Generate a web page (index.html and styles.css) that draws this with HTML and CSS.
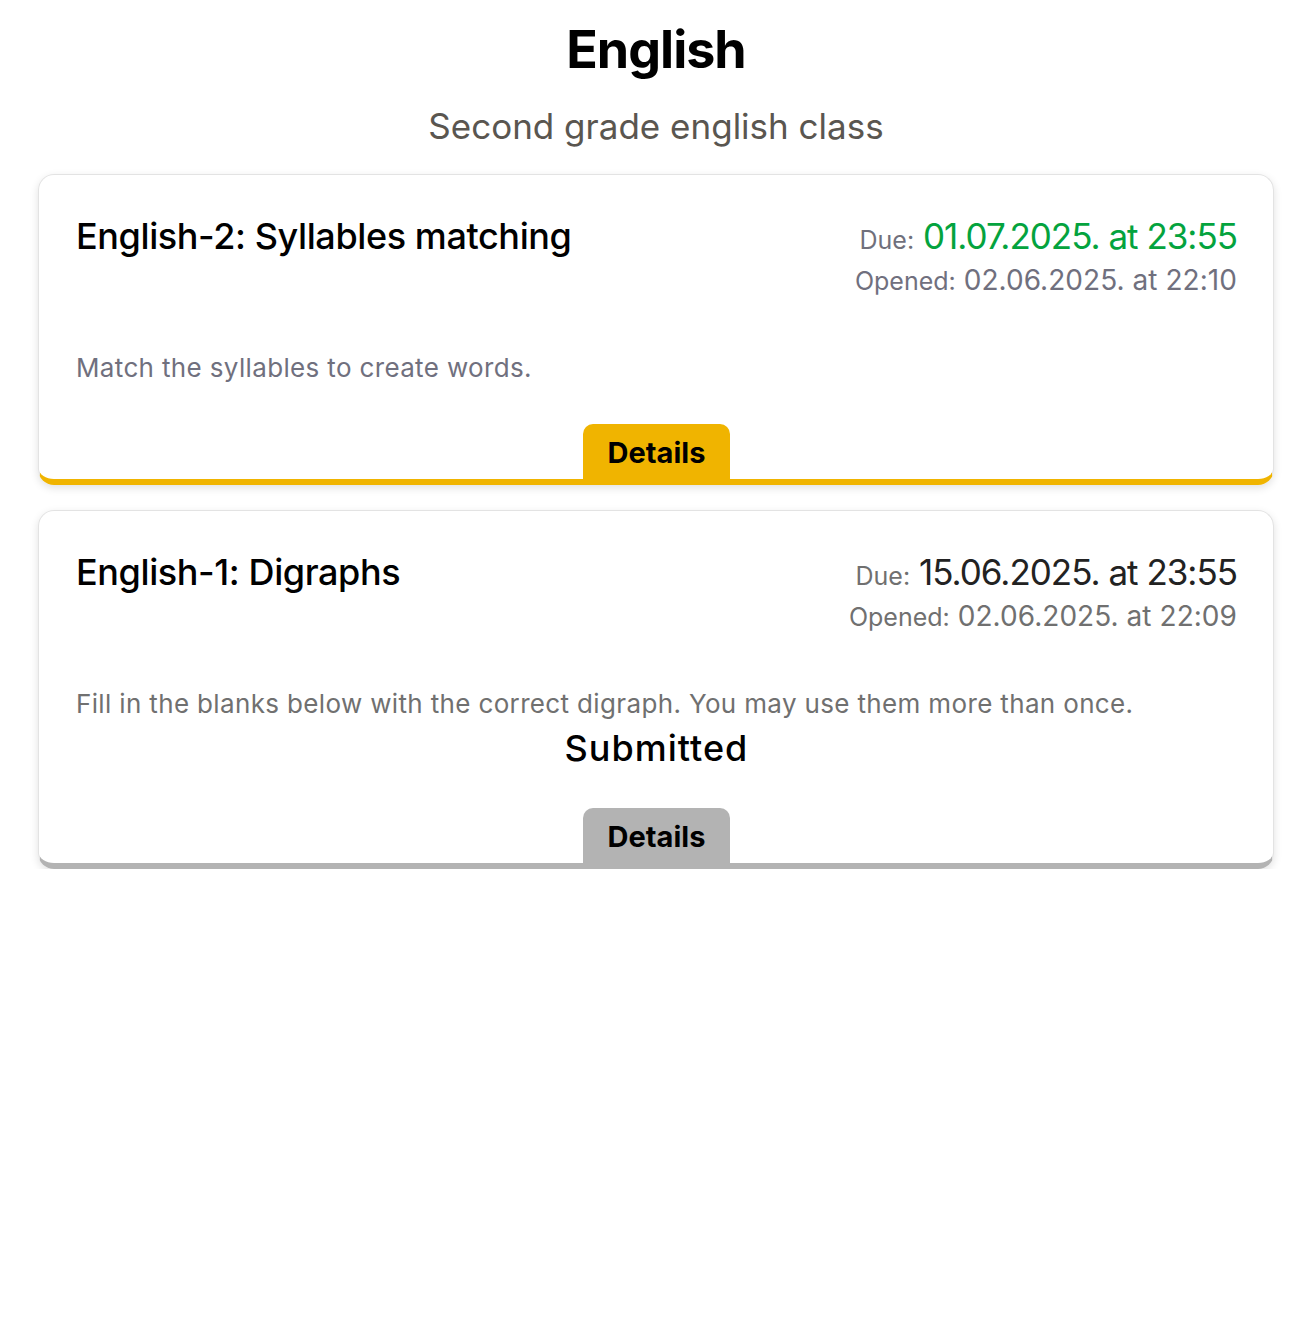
FILE: index.html
```html
<!DOCTYPE html>
<html lang="en">
<head>
<meta charset="utf-8">
<title>English</title>
<link rel="stylesheet" href="styles.css">
</head>
<body>
<main class="page">
  <header class="page-head">
    <h1 class="page-title">English</h1>
    <p class="page-sub">Second grade english class</p>
  </header>

  <section class="cards">
    <article class="card card-open">
      <div class="card-top">
        <h2 class="card-title">English-2: Syllables matching</h2>
        <div class="dates">
          <div class="due"><span class="lbl">Due:</span> <span class="due-val green">01.07.2025. at 23:55</span></div>
          <div class="opened blue-gray"><span class="lbl-o">Opened:</span> 02.06.2025. at 22:10</div>
        </div>
      </div>
      <p class="desc blue-gray">Match the syllables to create words.</p>
      <div class="foot">
        <a class="details yellow">Details</a>
      </div>
    </article>

    <article class="card card-done">
      <div class="card-top">
        <h2 class="card-title">English-1: Digraphs</h2>
        <div class="dates">
          <div class="due"><span class="lbl gray">Due:</span> <span class="due-val dark">15.06.2025. at 23:55</span></div>
          <div class="opened gray"><span class="lbl-o">Opened:</span> 02.06.2025. at 22:09</div>
        </div>
      </div>
      <p class="desc gray">Fill in the blanks below with the correct digraph. You may use them more than once.</p>
      <p class="status">Submitted</p>
      <div class="foot">
        <a class="details grey">Details</a>
      </div>
    </article>
  </section>
</main>
</body>
</html>
```

FILE: styles.css
```css
* { box-sizing: border-box; }
html, body { margin: 0; padding: 0; background: #fff; }
body {
  font-family: "Inter", "Noto Sans", sans-serif;
  color: #000;
}
.page {
  width: 1236px;
  margin-left: 38px;
}
.page-head { text-align: center; }
.page-title {
  margin: 0;
  padding-top: 16px;
  font-size: 52px;
  line-height: 68px;
  font-weight: 700;
  letter-spacing: -1px;
}
.page-sub {
  margin: 0;
  padding-top: 18px;
  font-size: 35px;
  line-height: 48px;
  color: #5a5650;
  letter-spacing: 0;
}
.cards {
  margin-top: 24px;
  display: flex;
  flex-direction: column;
  gap: 25px;
}
.card {
  border: 1px solid #e3e3e3;
  border-radius: 16px;
  box-shadow: 0 3px 8px rgba(0,0,0,0.12);
  padding: 37px 36px 0 37px;
  display: flex;
  flex-direction: column;
  overflow: hidden;
}
.card-open { border-bottom: 6px solid #f0b400; }
.card-done { border-bottom: 6px solid #b3b3b3; }
.card-top {
  display: flex;
  justify-content: space-between;
  align-items: flex-start;
}
.card-title {
  margin: 0;
  font-size: 36px;
  line-height: 48px;
  font-weight: 500;
  letter-spacing: -0.4px;
}
.dates { text-align: right; }
.due { font-size: 35px; line-height: 48px; letter-spacing: -1px; }
.lbl { font-size: 25px; color: #70707c; letter-spacing: 0; }
.lbl.gray { color: #707070; }
.due-val.green { color: #04a33e; }
.due-val.dark { color: #222; }
.opened { font-size: 28px; line-height: 32px; letter-spacing: 0.05px; }
.lbl-o { font-size: 25px; letter-spacing: 0; }
.blue-gray { color: #70707e; }
.gray { color: #707070; }
.desc {
  margin: 51px 0 0 0;
  font-size: 26px;
  line-height: 40px;
  letter-spacing: 0.35px;
}
.status {
  margin: 0;
  text-align: center;
  font-size: 36px;
  line-height: 48px;
  font-weight: 500;
  letter-spacing: 1px;
}
.foot {
  display: flex;
  justify-content: center;
  margin-top: 36px;
}
.status + .foot { margin-top: 36px; }
.details {
  display: block;
  width: 147px;
  height: 55px;
  line-height: 57px;
  text-align: center;
  font-size: 29px;
  font-weight: 700;
  color: #000;
  border-radius: 10px 10px 0 0;
  letter-spacing: 0;
}
.details.yellow { background: #f0b400; }
.details.grey { background: #b3b3b3; }
```
